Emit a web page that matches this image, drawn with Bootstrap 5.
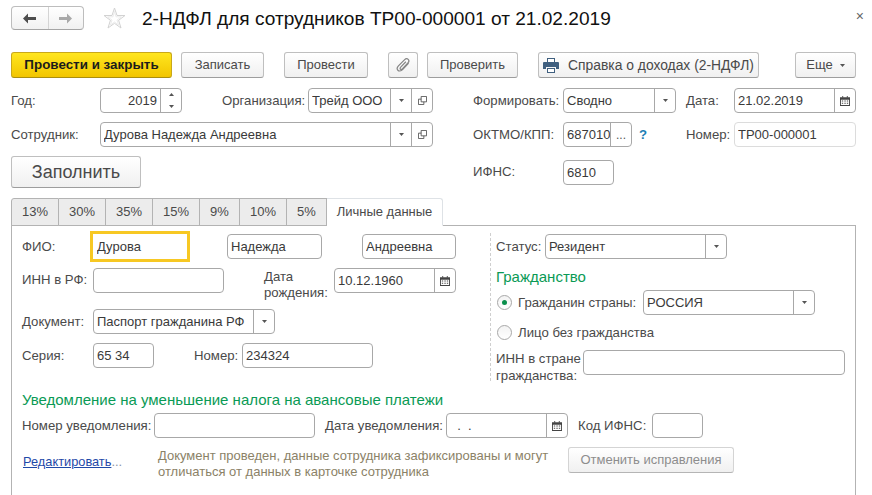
<!DOCTYPE html>
<html lang="ru"><head><meta charset="utf-8"><title>2-НДФЛ</title>
<link href="https://cdn.jsdelivr.net/npm/bootstrap@5.3.0/dist/css/bootstrap.min.css" rel="stylesheet">
<style>
html,body{height:495px;overflow:hidden;background:#fff}
body{font:13.2px/16px "Liberation Sans",Arial,sans-serif;color:#4a4a4a}
.pg{padding:6px 16px 0 11px;position:relative}
svg{display:block;flex:none}
.ttl{height:24px;margin-bottom:22px}
.navg{width:73px;height:24px;border:1px solid #bdbdbd;border-bottom-color:#a5a5a5;border-radius:4px;background:linear-gradient(#fff,#f1f1f1)}
.navg>span{width:36px;height:22px;display:flex;align-items:center;justify-content:center}
.navg>span+span{border-left:1px solid #d4d4d4}
.star{margin:0 16px 0 19px}
.ttxt{font-size:19.1px;line-height:28px;color:#111;margin:2px 0 0;font-weight:400}
.clz{position:absolute;right:8px;top:10px;font-size:14px;line-height:12px;color:#666}
.tb{height:26px;margin-bottom:10px}
.b1c.btn{height:26px;padding:0;font-size:13px;line-height:24px;color:#4a4a4a;background:linear-gradient(#fff,#f0f0f0);border:1px solid #bfbfbf;border-bottom-color:#9d9d9d;border-radius:3px;display:flex;align-items:center;justify-content:center;flex:none}
.b1c.pri{font-size:13.4px;background:linear-gradient(#ffe61f,#f2c500);border-color:#c9a81a;border-bottom-color:#a98e10;color:#1b1b1b;font-weight:700}
.b1c.dis{color:#8d8d8d;border-color:#d4d4d4;border-bottom-color:#b5b5b5;background:linear-gradient(#fff,#f0f0f0)}
.b1c.big{height:32px;font-size:18px}
.b1c.wide{font-size:13.85px}
.rw{display:flex;align-items:center;flex:none}
.h25{height:25px}
.mb9{margin-bottom:9px}
.lb{flex:none;white-space:nowrap}
.fld{display:flex;flex:none;height:25px;border:1px solid #a8a8a8;border-radius:4px;background:#fff;overflow:hidden}
.fld.soft{border-color:#dcdcdc}
.fld .form-control{flex:1 1 0;min-width:0;height:23px;border:0;border-radius:0;background:transparent;padding:0 3px;font-size:13px;line-height:23px;color:#3a3a3a;box-shadow:none}
.fld .tend{text-align:right}
.fb{flex:none;width:21px;border-left:1px solid #a8a8a8;display:flex;align-items:center;justify-content:center;font-size:12px;color:#555}
.fb.spin{flex-direction:column;justify-content:space-between;padding:4px 0}
.foc{border:3px solid #f7c823;border-radius:0;height:31px}
.foc .form-control{height:25px;padding-left:4px}
.qm{color:#1d7fb5;font-weight:700;margin:0 0 0 7px;width:47px}
.nav-tabs.tbs{height:28px;border:0;flex-wrap:nowrap;position:relative;z-index:1}
.tbs .nav-link{height:28px;margin:0;padding:0;display:flex;align-items:center;justify-content:center;font-size:13px;color:#4a4a4a;background:#ececec;border:1px solid #b3b3b3;border-left-width:0;border-radius:0}
.tbs .nav-item:first-child .nav-link{border-left-width:1px;border-top-left-radius:3px}
.tbs .nav-link.active{background:#fff;border-bottom-color:#fff;border-top-right-radius:3px;color:#4a4a4a}
.t48{width:48px}.t47{width:47px}.t40{width:40px}.t116{width:116px}
.pnl{border:1px solid #b3b3b3;border-bottom:0;width:845px;height:280px;padding-left:10px;margin-top:-1px;position:relative}
.lc{width:468px;padding-top:5px;flex:none}
.rc{margin-top:7px;height:148px;border-left:1px dashed #cfcfcf;padding:1px 0 0 5px;flex:1}
.g1{font-size:15px;line-height:20px;color:#0a9a55;margin:0;font-weight:400}
.gh1{margin:8px 0 3px}
.rad{width:15px;height:15px;border:1px solid #a8a8a8;border-radius:50%;margin:0 6px 0 1px;flex:none;display:flex;align-items:center;justify-content:center;background:linear-gradient(#f3f3f3,#fff)}
.rad i{width:5px;height:5px;border-radius:50%;background:#0a8f4c;display:block}
.mt5{margin-top:5px}
.gh2{margin:9px 0 3px}
.lnk{width:136px;padding:7px 0 0 1px;color:#8a94a8;font-size:12.8px}
.lnk a{color:#1f49a8}
.nt{width:410px;color:#8b8267;font-size:13px;margin:1px 0 0}
.w40{width:40px;flex:none}.w10{width:10px;flex:none}.w37{width:37px;flex:none}
.w8{width:9px;flex:none}.w20{width:20px;flex:none}.w36{width:36px;flex:none}.w332{width:332px;flex:none}
.l89{width:89px}.l86{width:86px}.l90{width:90px}.l48{width:48px}.l68{width:68px}.l71{width:71px}.l70{width:70px;white-space:normal;align-self:flex-start;margin-top:1px}
.l49{width:49px}.l147{width:147px}.l87{width:87px;white-space:normal;line-height:17px;align-self:flex-start}.l132{width:132px}.l121{width:121px}.l74{width:74px}
.f82{width:82px}.f125{width:125px}.f113{width:113px}.f122{width:122px}.f333{width:333px}.f69{width:69px}.f51{width:51px}
.f100{width:100px}.f95{width:95px}.f94{width:94px}.f131{width:131px}.f182{width:182px}.f61{width:61px}.f172{width:172px}.f262{width:262px}.f161{width:161px}
.b161{width:161px}.b83{width:83px}.b84{width:84px}.b30{width:30px}.b91{width:91px}.b221{width:221px}.b61{width:61px}.b130{width:130px}.b166{width:166px}
.r32{height:32px;margin-bottom:10px}
.ra{height:32px;margin-bottom:9px}
.rt{align-items:flex-start}
.lh3{margin-bottom:6px}
.gp6{gap:9px}
.gp2{gap:7px}
.lst{padding-top:4px}
</style></head><body>
<div class="pg">
<div class="d-flex align-items-center ttl">
  <div class="navg d-flex">
    <span><svg width="15" height="11" viewBox="0 0 15 11"><path d="M6 .5 1 5.500l5 5V7h8V4H6z" fill="#4d4d4d"/></svg></span>
    <span><svg width="15" height="11" viewBox="0 0 15 11"><path d="M9 .5l5 5-5 5V7H1V4h8z" fill="#a9a9a9"/></svg></span>
  </div>
  <svg class="star" width="23" height="22" viewBox="0 0 23 22"><path d="M11.500 1 14 8.500h8l-6.400 4.800 2.400 7.700-6.500-4.700L5 21l2.400-7.700L1 8.500h8z" fill="#fff" stroke="#d2d2d2"/><path d="M11.500 4.500 13 9.800h5.300l-4.300 3.200 1.600 5-4.100-3-4.100 3L9 13 4.700 9.800H10z" fill="none" stroke="#ececec"/></svg>
  <h1 class="ttxt">2-НДФЛ для сотрудников ТР00-000001 от 21.02.2019</h1>
  <span class="clz">×</span>
</div>
<div class="d-flex tb">
  <button class="btn b1c pri b161">Провести и закрыть</button><span class="w8"></span>
  <button class="btn b1c b83">Записать</button><span class="w20"></span>
  <button class="btn b1c b84">Провести</button><span class="w20"></span>
  <button class="btn b1c b30"><svg width="15" height="16" viewBox="0 0 16 17"><path d="M13.500 6.500 7 13.500c-1.800 1.800-4 1.700-5 .6s-1-3 .6-4.700L9 3c1.300-1.300 3-1.500 4-.5s.9 2.600-.3 3.800L6.800 12.600c-.7.700-1.600.8-2.100.3s-.4-1.400.3-2.100L10.500 5" fill="none" stroke="#858585" stroke-width="1.300"/></svg></button><span class="w8"></span>
  <button class="btn b1c b91">Проверить</button><span class="w20"></span>
  <button class="btn b1c wide b221 gp6"><svg width="16" height="15" viewBox="0 0 16 15"><path d="M4 0h8v4H4z" fill="#3f5f7f"/><path d="M5 1h6v3H5z" fill="#fff"/><path d="M1 4h14a1 1 0 0 1 1 1v6h-3V9H3v2H0V5a1 1 0 0 1 1-1z" fill="#3f5f7f"/><path d="M4 10h8v5H4z" fill="#3f5f7f"/><path d="M5 11h6v3H5z" fill="#fff"/></svg>Справка о доходах (2-НДФЛ)</button><span class="w36"></span>
  <button class="btn b1c b61 gp2">Еще<svg width="5" height="3" viewBox="0 0 7 4"><path d="M0 0h7L3.500 4z" fill="#555"/></svg></button>
</div>
<div class="rw h25 mb9">
  <span class="lb l89">Год:</span>
  <div class="fld f82"><input class="form-control tend" value="2019"><span class="fb spin"><svg width="5" height="3" viewBox="0 0 5 3"><path d="M0 3h5L2.500 0z" fill="#555"/></svg><svg width="5" height="3" viewBox="0 0 5 3"><path d="M0 0h5L2.500 3z" fill="#555"/></svg></span></div>
  <span class="w40"></span><span class="lb l86">Организация:</span>
  <div class="fld f125"><input class="form-control" value="Трейд ООО"><span class="fb"><svg width="5" height="3" viewBox="0 0 7 4"><path d="M0 0h7L3.500 4z" fill="#555"/></svg></span><span class="fb"><svg width="9" height="9" viewBox="0 0 10 10"><path d="M3.500.5h6v6h-6zM3.500 3.500h-3v6h6v-3" fill="none" stroke="#555"/></svg></span></div>
  <span class="w40"></span><span class="lb l90">Формировать:</span>
  <div class="fld f113"><input class="form-control" value="Сводно"><span class="fb"><svg width="5" height="3" viewBox="0 0 7 4"><path d="M0 0h7L3.500 4z" fill="#555"/></svg></span></div>
  <span class="w10"></span><span class="lb l48">Дата:</span>
  <div class="fld f122"><input class="form-control" value="21.02.2019"><span class="fb"><svg width="10" height="10" viewBox="0 0 11 11"><path d="M0 1.500h11V11H0z" fill="#444"/><path d="M1 4h9v6H1z" fill="#fff"/><path d="M2.500 0h1v2h-1zM7.500 0h1v2h-1zM2 5h1.500v1H2zM4.800 5h1.500v1H4.800zM7.500 5H9v1H7.500zM2 7.500h1.500v1H2zM4.800 7.500h1.500v1H4.800zM7.500 7.500H9v1H7.500z" fill="#444"/></svg></span></div>
</div>
<div class="rw h25 mb9">
  <span class="lb l89">Сотрудник:</span>
  <div class="fld f333"><input class="form-control" value="Дурова Надежда Андреевна"><span class="fb"><svg width="5" height="3" viewBox="0 0 7 4"><path d="M0 0h7L3.500 4z" fill="#555"/></svg></span><span class="fb"><svg width="9" height="9" viewBox="0 0 10 10"><path d="M3.500.5h6v6h-6zM3.500 3.500h-3v6h6v-3" fill="none" stroke="#555"/></svg></span></div>
  <span class="w40"></span><span class="lb l90">ОКТМО/КПП:</span>
  <div class="fld f69"><input class="form-control pe-0" value="687010"><span class="fb">...</span></div>
  <span class="qm">?</span><span class="lb l48">Номер:</span>
  <div class="fld f122 soft"><input class="form-control" value="ТР00-000001"></div>
</div>
<div class="rw r32">
  <button class="btn b1c big b130">Заполнить</button>
  <span class="w332"></span>
  <span class="lb l90">ИФНС:</span>
  <div class="fld f51"><input class="form-control" value="6810"></div>
</div>
<ul class="nav nav-tabs tbs">
  <li class="nav-item"><a class="nav-link t48" href="#">13%</a></li>
  <li class="nav-item"><a class="nav-link t47" href="#">30%</a></li>
  <li class="nav-item"><a class="nav-link t47" href="#">35%</a></li>
  <li class="nav-item"><a class="nav-link t47" href="#">15%</a></li>
  <li class="nav-item"><a class="nav-link t40" href="#">9%</a></li>
  <li class="nav-item"><a class="nav-link t47" href="#">10%</a></li>
  <li class="nav-item"><a class="nav-link t40" href="#">5%</a></li>
  <li class="nav-item"><a class="nav-link active t116" href="#">Личные данные</a></li>
</ul>
<div class="pnl">
  <div class="d-flex">
    <div class="lc">
      <div class="rw lh3">
        <span class="lb l68">ФИО:</span>
        <div class="fld f100 foc"><input class="form-control" value="Дурова"></div><span class="w37"></span>
        <div class="fld f95"><input class="form-control" value="Надежда"></div><span class="w40"></span>
        <div class="fld f94"><input class="form-control" value="Андреевна"></div>
      </div>
      <div class="rw rt ra">
        <span class="lb l71 lst">ИНН в РФ:</span>
        <div class="fld f131"><input class="form-control"></div><span class="w40"></span>
        <span class="lb l70">Дата рождения:</span>
        <div class="fld f122"><input class="form-control" value="10.12.1960"><span class="fb"><svg width="10" height="10" viewBox="0 0 11 11"><path d="M0 1.500h11V11H0z" fill="#444"/><path d="M1 4h9v6H1z" fill="#fff"/><path d="M2.500 0h1v2h-1zM7.500 0h1v2h-1zM2 5h1.500v1H2zM4.800 5h1.500v1H4.800zM7.500 5H9v1H7.500zM2 7.500h1.500v1H2zM4.800 7.500h1.500v1H4.800zM7.500 7.500H9v1H7.500z" fill="#444"/></svg></span></div>
      </div>
      <div class="rw h25 mb9">
        <span class="lb l71">Документ:</span>
        <div class="fld f182"><input class="form-control" value="Паспорт гражданина РФ"><span class="fb"><svg width="5" height="3" viewBox="0 0 7 4"><path d="M0 0h7L3.500 4z" fill="#555"/></svg></span></div>
      </div>
      <div class="rw h25">
        <span class="lb l71">Серия:</span>
        <div class="fld f61"><input class="form-control" value="65 34"></div><span class="w40"></span>
        <span class="lb l48">Номер:</span>
        <div class="fld f131"><input class="form-control" value="234324"></div>
      </div>
    </div>
    <div class="rc">
      <div class="rw h25">
        <span class="lb l49">Статус:</span>
        <div class="fld f182"><input class="form-control" value="Резидент"><span class="fb"><svg width="5" height="3" viewBox="0 0 7 4"><path d="M0 0h7L3.500 4z" fill="#555"/></svg></span></div>
      </div>
      <h2 class="g1 gh1">Гражданство</h2>
      <div class="rw h25">
        <label class="lb l147 d-flex align-items-center"><span class="rad"><i></i></span>Гражданин страны:</label>
        <div class="fld f172"><input class="form-control" value="РОССИЯ"><span class="fb"><svg width="5" height="3" viewBox="0 0 7 4"><path d="M0 0h7L3.500 4z" fill="#555"/></svg></span></div>
      </div>
      <div class="rw h25 mt5">
        <label class="lb d-flex align-items-center"><span class="rad"></span>Лицо без гражданства</label>
      </div>
      <div class="rw rt mt5">
        <span class="lb l87">ИНН в стране гражданства:</span>
        <div class="fld f262"><input class="form-control"></div>
      </div>
    </div>
  </div>
  <h2 class="g1 gh2">Уведомление на уменьшение налога на авансовые платежи</h2>
  <div class="rw h25 mb9">
    <span class="lb l132">Номер уведомления:</span>
    <div class="fld f161"><input class="form-control"></div><span class="w10"></span>
    <span class="lb l121">Дата уведомления:</span>
    <div class="fld f122"><input class="form-control" value="  .  ."><span class="fb"><svg width="10" height="10" viewBox="0 0 11 11"><path d="M0 1.500h11V11H0z" fill="#444"/><path d="M1 4h9v6H1z" fill="#fff"/><path d="M2.500 0h1v2h-1zM7.500 0h1v2h-1zM2 5h1.500v1H2zM4.800 5h1.500v1H4.800zM7.500 5H9v1H7.500zM2 7.500h1.500v1H2zM4.800 7.500h1.500v1H4.800zM7.500 7.500H9v1H7.500z" fill="#444"/></svg></span></div><span class="w10"></span>
    <span class="lb l74">Код ИФНС:</span>
    <div class="fld f51"><input class="form-control"></div>
  </div>
  <div class="rw rt">
    <span class="lnk lb"><a href="#">Редактировать</a>...</span>
    <p class="nt">Документ проведен, данные сотрудника зафиксированы и могут<br>отличаться от данных в карточке сотрудника</p>
    <button class="btn b1c dis b166">Отменить исправления</button>
  </div>
</div>
</div>
</body></html>
